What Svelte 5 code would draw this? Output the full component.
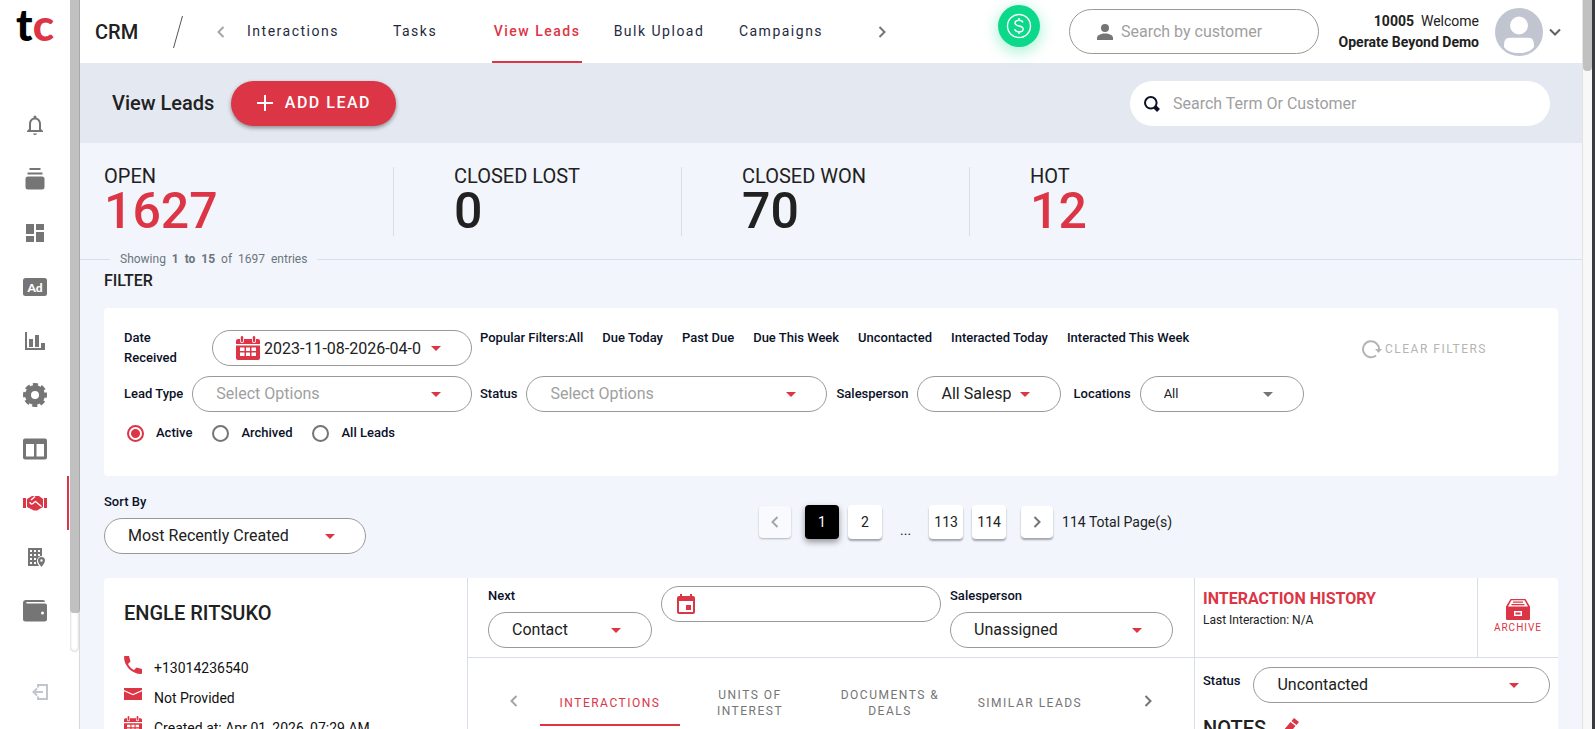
<script>
const icons = {
    bell: 'M12 22a2 2 0 0 0 2-1.6h-4A2 2 0 0 0 12 22zm6-6v-5c0-3.100-1.600-5.600-4.500-6.300V4a1.500 1.500 0 0 0-3 0v.7C7.600 5.400 6 7.900 6 11v5l-2 2v1h16v-1l-2-2zm-2 1H8v-6c0-2.500 1.500-4.500 4-4.500s4 2 4 4.500v6z',
    stack: 'M6.500 1h11v2h-11zM4.500 5.500h15v2h-15zM5 9.500h14a2.500 2.500 0 0 1 2.500 2.500v8a2.500 2.500 0 0 1-2.500 2.500H5A2.500 2.500 0 0 1 2.500 20v-8A2.500 2.500 0 0 1 5 9.500z',
    board: 'M3 3h8v10H3zM13 3h8v6h-8zM3 15h8v6H3zM13 11h8v10h-8z',
    chart: 'M2 3h2v16h18v2H2zM6 10h4v8H6zM12 6h4v12h-4zM18 14h4v5h-4z',
    table: 'M2 1.500h20a2 2 0 0 1 2 2v17a2 2 0 0 1-2 2H2a2 2 0 0 1-2-2v-17a2 2 0 0 1 2-2zM3 7v12.500h8V7zM13.500 7v12.500H21V7z',
    hands: 'M0 7h3v10H0zM21 7h3v10h-3zM4 8l5-3h7l4 3v8l-6 3.500H11L4 16z',
    building: 'M5 3h14v8a5 5 0 0 0-5 5c0 2 1 3.500 2 5H5zM7 5v2h2V5zm4 0v2h2V5zm4 0v2h2V5zM7 9v2h2V9zm4 0v2h2V9zm4 0v2h2V9zM7 13v2h2v-2zm4 0v2h2v-2zM7 17v2h2v-2zm4 0v2h2v-2zM18.500 12a3.500 3.500 0 0 1 3.500 3.500c0 2.500-3.500 6.500-3.500 6.500S15 18 15 15.500a3.500 3.500 0 0 1 3.500-3.500zm0 2.300a1.200 1.200 0 1 0 0 2.400 1.200 1.200 0 0 0 0-2.400z',
    wallet: 'M3 1h17a2 2 0 0 1 2 2H4a.8.8 0 0 0 0 1.600h18a2 2 0 0 1 2 2V20a2.500 2.500 0 0 1-2.500 2.500h-19A2.500 2.500 0 0 1 0 20V4a3 3 0 0 1 3-3zM19.500 12.500a1.500 1.500 0 1 0 0 3 1.500 1.500 0 0 0 0-3z'
};
const menu = [
    { id: 'bell', label: 'Notifications' },
    { id: 'stack', label: 'Inventory' },
    { id: 'board', label: 'Dashboard' },
    { id: 'ad', label: 'Ads' },
    { id: 'chart', label: 'Reports' },
    { id: 'gear', label: 'Settings' },
    { id: 'table', label: 'Tables' },
    { id: 'hands', label: 'CRM' },
    { id: 'building', label: 'Locations' },
    { id: 'wallet', label: 'Wallet' }
];
const sections = ['Interactions', 'Tasks', 'View Leads', 'Bulk Upload', 'Campaigns'];
const stats = [
    { label: 'OPEN', value: 1627, red: true },
    { label: 'CLOSED LOST', value: 0 },
    { label: 'CLOSED WON', value: 70 },
    { label: 'HOT', value: 12, red: true }
];
const popular = ['Due Today', 'Past Due', 'Due This Week', 'Uncontacted', 'Interacted Today', 'Interacted This Week'];
const leadTabs = ['INTERACTIONS', 'UNITS OF INTEREST', 'DOCUMENTS & DEALS', 'SIMILAR LEADS'];

let section = $state('View Leads');
let leadTab = $state('INTERACTIONS');
let page = $state(1);
let shown = $state('Active');
let dateRange = $state('2023-11-08-2026-04-01');
</script>

{#snippet chevron(dir)}
    <svg class="chevron" viewBox="0 0 12 12" width="12" height="12">
        <path d={dir === 'left' ? 'M8.500 1L3.500 6l5 5' : dir === 'down' ? 'M1 3.500l5 5 5-5' : 'M3.500 1l5 5-5 5'} />
    </svg>
{/snippet}

{#snippet calendar(size)}
    <svg class="red" viewBox="0 0 24 24" width={size} height={size}>
        <path fill-rule="evenodd" d="M2 3h2v2a2 2 0 0 0 4 0V3h8v2a2 2 0 0 0 4 0V3h2a2 2 0 0 1 2 2v3H0V5a2 2 0 0 1 2-2zM0 9.500h24V22a2 2 0 0 1-2 2H2a2 2 0 0 1-2-2zM4 11.500V15h4.500v-3.500zm6 0V15h4v-3.500zm5.500 0V15H20v-3.500zM4 16.500V20h4.500v-3.500zm6 0V20h4v-3.500zm5.500 0V20H20v-3.500z" />
        <rect x="4.800" y="0" width="2.400" height="6" rx="1.200" /><rect x="16.800" y="0" width="2.400" height="6" rx="1.200" />
    </svg>
{/snippet}

{#snippet dropdown(id, value, kind)}
    <div class="pill {kind}">
        <select {id}><option>{value}</option></select>
        <svg class="arrow" viewBox="0 0 10 5" width="10" height="5"><path d="M0 0h10L5 5z" /></svg>
    </div>
{/snippet}

<div class="app">
    <nav class="sidebar" aria-label="Main">
        <a class="logo" href="#home"><span>t</span><span class="red">c</span></a>
        {#each menu as item}
            <a class="item" class:active={item.id === 'hands'} href="#{item.id}" aria-label={item.label}>
                <svg viewBox="0 0 24 24" width="24" height="24">
                    {#if item.id === 'ad'}
                        <rect x="0" y="3" width="24" height="18" rx="2.500" />
                        <text x="12" y="17" text-anchor="middle">Ad</text>
                    {:else if item.id === 'gear'}
                        <circle class="wheel" cx="12" cy="12" r="7" />
                        <circle class="teeth" cx="12" cy="12" r="10" transform="rotate(-13 12 12)" />
                    {:else}
                        <path fill-rule="evenodd" d={icons[item.id]} />
                        {#if item.id === 'hands'}
                            <path class="grip" d="M7 11c0 2.500 3 2.500 4 .5l1.500-1 6 5M8 9l4-3.500" />
                        {/if}
                    {/if}
                </svg>
            </a>
        {/each}
        <a class="logout" href="#logout" aria-label="Log out">
            <svg viewBox="0 0 16 16" width="16" height="16"><path d="M6 3.500V1h9v14H6v-2.500M11 8H1.500M5 4.500L1.500 8 5 11.500" /></svg>
        </a>
    </nav>
    <div class="side-track"><div class="groove"><div class="thumb"></div></div></div>

    <main>
        <header>
            <h1>CRM</h1>
            <svg class="slash" viewBox="0 0 10 32" width="10" height="32"><path d="M9.500 0L.5 32" /></svg>
            <button class="icon dim" aria-label="Previous sections">{@render chevron('left')}</button>
            <div class="sections">
                {#each sections as name}
                    <button class:active={section === name} onclick={() => (section = name)}>{name}</button>
                {/each}
            </div>
            <button class="icon" aria-label="Next sections">{@render chevron('right')}</button>
            <div class="account">
                <button class="money" aria-label="Payments">
                    <svg viewBox="0 0 26 26" width="26" height="26"><circle cx="13" cy="13" r="11.500" /><path d="M17 9.500c-.5-1.500-2-2.200-4-2.200-2.300 0-4 1-4 2.800 0 4 8.200 1.800 8.200 5.800 0 1.800-1.800 2.900-4.200 2.900-2.200 0-3.900-.9-4.300-2.600M13 5v2.500M13 18.500V21" /></svg>
                </button>
                <div class="customer">
                    <svg viewBox="0 0 16 16" width="16" height="16"><circle cx="8" cy="4" r="4" /><path d="M0 16v-2c0-3 4-4.500 8-4.500s8 1.500 8 4.500v2z" /></svg>
                    <input type="text" placeholder="Search by customer" aria-label="Search by customer" />
                </div>
                <p class="user"><b>10005</b>&nbsp; Welcome<br /><b>Operate Beyond Demo</b></p>
                <button class="profile" aria-label="Profile">
                    <svg viewBox="0 0 48 48" width="48" height="48"><circle cx="24" cy="24" r="24" /><circle class="face" cx="24" cy="17.500" r="9" /><path class="face" d="M9 39c0-6.500 1-9.300 6-9.300h18c5 0 6 2.800 6 9.300-3 4-8 6-15 6s-12-2-15-6z" /></svg>
                    {@render chevron('down')}
                </button>
            </div>
        </header>

        <div class="titlebar">
            <h2>View Leads</h2>
            <button class="add"><svg viewBox="0 0 16 16" width="16" height="16"><path d="M8 0v16M0 8h16" /></svg>ADD LEAD</button>
            <div class="search">
                <svg viewBox="0 0 16 16" width="16" height="16"><circle cx="6.800" cy="6.800" r="5.800" /><path d="M11 11l3.500 3.500" /></svg>
                <input type="text" placeholder="Search Term Or Customer" aria-label="Search Term Or Customer" />
            </div>
        </div>

        <div class="stats">
            {#each stats as stat}
                <div class="stat">
                    <span>{stat.label}</span>
                    <strong class:red={stat.red}>{stat.value}</strong>
                </div>
            {/each}
        </div>
        <div class="showing"><span>Showing&nbsp; <b>1&nbsp; to&nbsp; 15</b>&nbsp; of&nbsp; 1697&nbsp; entries</span></div>

        <div class="content">
            <h3>FILTER</h3>
            <section class="filters">
                <div class="fields">
                    <div class="line">
                        <div class="left">
                            <label class="two" for="dates">Date Received</label>
                            <div class="pill date">
                                {@render calendar(24)}
                                <input id="dates" type="text" bind:value={dateRange} />
                                <svg class="arrow" viewBox="0 0 10 5" width="10" height="5"><path d="M0 0h10L5 5z" /></svg>
                            </div>
                        </div>
                        <div class="popular"><button><span>Popular Filters:</span>All</button>{#each popular as name}<button>{name}</button>{/each}</div>
                    </div>
                    <div class="line">
                        <div class="left">
                            <label for="type">Lead Type</label>
                            {@render dropdown('type', 'Select Options', 'empty')}
                        </div>
                        <div class="more">
                            <label for="status">Status</label>
                            {@render dropdown('status', 'Select Options', 'empty wide')}
                            <label for="sales">Salesperson</label>
                            {@render dropdown('sales', 'All Salespersons', 'sales')}
                            <label class="spaced" for="place">Locations</label>
                            {@render dropdown('place', 'All', 'place')}
                        </div>
                    </div>
                    <div class="radios">
                        {#each ['Active', 'Archived', 'All Leads'] as name}
                            <label><input type="radio" name="shown" value={name} bind:group={shown} />{name}</label>
                        {/each}
                    </div>
                </div>
                <button class="clear"><svg viewBox="0 0 20 20" width="20" height="20"><path d="M14 16.500A8 8 0 1 1 17 11" /><path class="tip" d="M13 10h7l-3.500 4z" /></svg>CLEAR FILTERS</button>
            </section>

            <div class="listbar">
                <div class="sort">
                    <label for="sort">Sort By</label>
                    {@render dropdown('sort', 'Most Recently Created', 'sortby')}
                </div>
                <div class="pages">
                    <button class="step" disabled aria-label="Previous page">{@render chevron('left')}</button>
                    <button class:active={page === 1} onclick={() => (page = 1)}>1</button>
                    <button class:active={page === 2} onclick={() => (page = 2)}>2</button>
                    <span class="dots">...</span>
                    <button class:active={page === 113} onclick={() => (page = 113)}>113</button>
                    <button class:active={page === 114} onclick={() => (page = 114)}>114</button>
                    <button class="step" aria-label="Next page">{@render chevron('right')}</button>
                    <span>114 Total Page(s)</span>
                </div>
            </div>

            <article class="lead">
                <div class="person">
                    <h2>ENGLE RITSUKO</h2>
                    <p><svg class="red" viewBox="0 0 18 18" width="18" height="18"><path d="M1 0h4l1.500 5.500L4 8c1.200 2.500 3.500 4.800 6 6l2.500-2.500L18 13v4a1 1 0 0 1-1 1C8 18 0 10 0 1a1 1 0 0 1 1-1z" /></svg><a href="tel:+13014236540">+13014236540</a></p>
                    <p><svg class="red" viewBox="0 0 18 18" width="18" height="18"><path d="M0 2h18v2l-9 4-9-4zM0 5.200l9 4 9-4V14H0z" /></svg>Not Provided</p>
                    <p>{@render calendar(18)}Created at: Apr 01, 2026, 07:29 AM</p>
                </div>
                <div class="work">
                    <div class="next">
                        <div class="field contact"><label for="next">Next</label>{@render dropdown('next', 'Contact', '')}</div>
                        <div class="pill when">
                            <svg class="red" viewBox="0 0 18 20" width="18" height="20"><path fill-rule="evenodd" d="M3 0h2v2h8V0h2v2h1a2 2 0 0 1 2 2v14a2 2 0 0 1-2 2H2a2 2 0 0 1-2-2V4a2 2 0 0 1 2-2h1zM2 7v11h14V7zM9 11h5v5H9z" /></svg>
                            <input type="text" aria-label="Contact date" />
                        </div>
                        <div class="field owner"><label for="owner">Salesperson</label>{@render dropdown('owner', 'Unassigned', '')}</div>
                    </div>
                    <div class="tabs">
                        <button class="icon dim" aria-label="Previous tabs">{@render chevron('left')}</button>
                        <div class="tablist">
                            {#each leadTabs as name}
                                <button class:active={leadTab === name} onclick={() => (leadTab = name)}>{name}</button>
                            {/each}
                        </div>
                        <button class="icon" aria-label="Next tabs">{@render chevron('right')}</button>
                    </div>
                </div>
                <div class="history">
                    <div class="top">
                        <div class="last"><h4>INTERACTION HISTORY</h4><span>Last Interaction: N/A</span></div>
                        <button class="archive">
                            <svg viewBox="0 0 24 21" width="24" height="21"><path fill-rule="evenodd" d="M4.500 0h15L24 7.500V20a1 1 0 0 1-1 1H1a1 1 0 0 1-1-1V7.500zM5.500 1.200L2 7.500h20l-3.500-6.300zM8 12v5h8v-5zM9.500 13.500h5v2h-5z" /><path d="M7 2.500h10v1.200H7zM5.500 5h13v1.300h-13z" /></svg>
                            ARCHIVE
                        </button>
                    </div>
                    <div class="state"><label for="state">Status</label>{@render dropdown('state', 'Uncontacted', '')}</div>
                    <h3 class="notes">NOTES <svg class="red" viewBox="0 0 18 18" width="18" height="18"><path d="M13 0l5 4-2.500 3-5-4zM9.500 4l5 4L7 17l-6 1 1-5z" /></svg></h3>
                </div>
            </article>
        </div>
    </main>
    <div class="page-track"><div></div></div>
</div>

<style>
:global(body) {
    font: 14px/20px Roboto, sans-serif;
    color: #212121;
}
.app {
    display: flex;
    height: 100vh;
    overflow: hidden;
    background: #f2f5fc;
}
h1, h2, h3, h4, p {
    margin: 0;
    font-weight: 500;
}
h1, h2 {
    font-size: 20px;
    line-height: 24px;
}
button, input, select {
    border: 0;
    background: none;
    padding: 0;
    margin: 0;
    font: inherit;
    color: inherit;
    min-width: 0;
}
a {
    color: inherit;
    text-decoration: none;
}
svg {
    display: block;
    flex: none;
    fill: currentColor;
}
label {
    font-size: 13px;
    font-weight: 500;
    color: #0a1128;
}
input::placeholder {
    color: #a0a0a0;
    opacity: 1;
}
.red {
    color: #dc3545;
}
.chevron {
    fill: none;
    stroke: currentColor;
    stroke-width: 2;
}
.icon {
    color: #757575;
}
.dim {
    color: #a5a5a5;
}

/* sidebar */
.sidebar {
    width: 70px;
    background: #fff;
    color: #757575;
    flex: none;
}
.logo {
    display: flex;
    justify-content: center;
    height: 98px;
    font: 900 44px/48px Lato, sans-serif;
    color: #000;
}
.item {
    display: flex;
    align-items: center;
    justify-content: center;
    height: 54px;
    margin-right: 1px;
    padding-left: 1px;
}
.item.active {
    color: #dc3545;
    box-shadow: inset -2px 0 #dc3545;
}
.item text {
    font: 900 12px Lato, sans-serif;
    fill: #fff;
}
.grip {
    fill: none;
    stroke: #fff;
    stroke-width: 1.4;
}
.wheel {
    fill: none;
    stroke: currentColor;
    stroke-width: 6;
}
.teeth {
    fill: none;
    stroke: currentColor;
    stroke-width: 4;
    stroke-dasharray: 4.800 3.054;
}
.logout {
    display: flex;
    justify-content: center;
    padding: 46px 0 0 10px;
    color: #c0c5d0;
}
.logout svg {
    fill: none;
    stroke: currentColor;
    stroke-width: 2;
}
.side-track {
    width: 9px;
    flex: none;
    background: #fff;
    border-right: 1px solid #d5d8df;
}
.groove {
    height: 652px;
    border-radius: 0 0 5px 5px;
    box-shadow: inset 0 0 3px #0004;
}
.thumb {
    height: 613px;
    background: #c0c0c0;
    border-radius: 0 0 4px 4px;
    box-shadow: 1px 0 #a9a9a9;
}
.page-track {
    width: 9px;
    flex: none;
    background: #f8f8f8;
    border-left: 1px solid #e2e2e2;
    border-right: 3px solid #3a3b40;
}
.page-track div {
    height: 71px;
    background: #c1c1c1;
    border-radius: 0 0 4px 4px;
}

/* header */
main {
    flex: 1;
    min-width: 0;
}
header {
    display: flex;
    align-items: center;
    height: 63px;
    padding-left: 15px;
    background: #fff;
}
header h1 {
    width: 78px;
}
.slash {
    margin-right: 32px;
    stroke: #555;
}
.sections {
    display: flex;
    gap: 32px;
    margin: 0 50px 0 21px;
    align-self: stretch;
}
.sections button {
    width: 90px;
    white-space: nowrap;
    letter-spacing: 1.5px;
    color: #1f2a40;
    border-bottom: 2px solid transparent;
    display: flex;
    align-items: center;
    justify-content: center;
}
.sections .active {
    color: #dc3545;
    font-weight: 500;
    border-color: #dc3545;
}
.account {
    display: flex;
    align-items: center;
    margin-left: auto;
    padding-right: 21px;
}
.money {
    width: 42px;
    height: 42px;
    margin: 0 29px 12px 0;
    display: flex;
    align-items: center;
    justify-content: center;
    border-radius: 50%;
    background: #0bd888;
    color: #fff;
    box-shadow: 0 4px 16px #0bd88866;
}
.money svg {
    fill: none;
    stroke: #fff;
    stroke-width: 1.4;
}
.customer {
    display: flex;
    align-items: center;
    gap: 8px;
    width: 194px;
    height: 43px;
    padding: 0 27px;
    border: 1px solid #999;
    border-radius: 24px;
    color: #757575;
    font-size: 16px;
}
.customer input {
    flex: 1;
}
.user {
    width: 160px;
    text-align: right;
    line-height: 21px;
    white-space: nowrap;
    font-weight: 400;
}
.profile {
    display: flex;
    align-items: center;
    gap: 6px;
    margin-left: 16px;
    color: #616161;
}
.profile > svg:first-child {
    color: #c0c5d0;
}
.face {
    fill: #fff;
}

.titlebar {
    display: flex;
    align-items: center;
    height: 80px;
    padding: 0 32px;
    background: #e4e8f0;
}
.add {
    display: flex;
    align-items: center;
    justify-content: center;
    gap: 12px;
    width: 165px;
    height: 45px;
    margin-left: 17px;
    border-radius: 23px;
    background: #dc3545;
    color: #fff;
    font-size: 16px;
    font-weight: 500;
    letter-spacing: 1.5px;
    box-shadow: 0 2px 4px #0006;
}
.add svg {
    stroke: #fff;
    stroke-width: 2;
}
.search {
    display: flex;
    align-items: center;
    gap: 13px;
    width: 420px;
    height: 45px;
    box-sizing: border-box;
    margin-left: auto;
    padding: 2px 14px 0;
    border-radius: 23px;
    background: #fff;
    font-size: 16px;
}
.search input {
    flex: 1;
}
.search svg {
    fill: none;
    stroke: #0a1128;
    stroke-width: 2;
}
.search path {
    stroke-width: 4;
}

.stats {
    display: grid;
    grid-template-columns: 290px repeat(4, 1fr);
    margin: 24px 36px 0 24px;
}
.stat {
    height: 69px;
    padding-left: 60px;
    border-right: 1px solid #d9dce3;
}
.stat:first-child {
    padding-left: 0;
}
.stat:last-child {
    border: 0;
}
.stat span {
    display: block;
    font-size: 20px;
    line-height: 19px;
}
.stat strong {
    display: block;
    font-size: 50px;
    font-weight: 500;
    line-height: 50px;
}
.showing {
    display: flex;
    align-items: center;
    margin-top: 13px;
    font-size: 12px;
    color: #6c757d;
}
.showing::before, .showing::after {
    content: '';
    width: 30px;
    height: 1px;
    background: #d6dfec;
}
.showing::after {
    flex: 1;
}
.showing span {
    padding: 0 10px;
}

/* filter card */
.content {
    padding: 0 24px;
}
.content > h3 {
    font-size: 16px;
    line-height: 24px;
    margin-bottom: 15px;
}
.filters {
    display: flex;
    height: 168px;
    box-sizing: border-box;
    padding: 20px 20px 0;
    border-radius: 4px;
    background: #fff;
}
.fields {
    flex: 1;
}
.line, .left, .more {
    display: flex;
    align-items: center;
}
.line {
    gap: 8px;
    margin-bottom: 8px;
}
.left {
    width: 348px;
    justify-content: space-between;
    gap: 9px;
}
.left .pill {
    flex: 1;
}
.more {
    gap: 9px;
}
.more .spaced {
    margin-left: 3px;
}
.two {
    width: 79px;
}
.pill {
    display: flex;
    align-items: center;
    height: 36px;
    box-sizing: border-box;
    padding: 0 30px 0 23px;
    border: 1px solid #999;
    border-radius: 18px;
    background: #fff;
    font-size: 16px;
}
.pill select, .pill input {
    appearance: none;
    flex: 1;
    height: 34px;
    text-overflow: clip;
    overflow: hidden;
}
.arrow {
    color: #dc3545;
    margin-left: 9px;
}
.empty {
    color: #a0a0a0;
}
.left .date {
    flex: none;
    width: 260px;
}
.date input {
    margin-left: 4px;
}
.wide {
    width: 301px;
}
.sales {
    width: 144px;
}
.place {
    width: 164px;
    font-size: 13px;
}
.place .arrow {
    color: #757575;
}
.popular {
    display: flex;
    gap: 19px;
    margin-bottom: 20px;
    font-size: 13px;
    font-weight: 500;
    color: #0a1128;
}
.radios {
    display: flex;
    gap: 20px;
    margin-left: 3px;
    padding-top: 3px;
}
.radios label {
    display: flex;
    align-items: center;
    gap: 12px;
}
.radios input {
    appearance: none;
    width: 17px;
    height: 17px;
    border: 2px solid #757575;
    border-radius: 50%;
    box-sizing: border-box;
}
.radios input:checked {
    border-color: #dc3545;
    background: radial-gradient(#dc3545 4px, #fff 5px);
}
.clear {
    display: flex;
    align-items: center;
    align-self: flex-start;
    gap: 3px;
    margin: 11px 51px 0 0;
    font-size: 12px;
    letter-spacing: 1.5px;
    color: #b4b4b4;
}
.clear svg {
    fill: none;
    stroke: currentColor;
    stroke-width: 2;
}
.clear .tip {
    fill: currentColor;
    stroke: none;
}

/* sort and pages */
.listbar {
    display: flex;
    height: 102px;
}
.sort {
    width: 655px;
    padding-top: 16px;
}
.sort label {
    display: block;
    margin-bottom: 6px;
}
.sortby {
    width: 262px;
}
.pages {
    display: flex;
    align-items: center;
    align-self: flex-start;
    gap: 9px;
    padding-top: 28px;
}
.pages button {
    min-width: 34px;
    height: 34px;
    padding: 0 5px;
    border-radius: 4px;
    background: #fff;
    box-shadow: 0 2px 2px #0005;
}
.pages .step {
    min-width: 32px;
    height: 32px;
    padding: 0 10px;
    color: #757575;
}
.pages .step:first-child {
    margin-right: 5px;
}
.pages .step:disabled {
    background: #f9fafd;
    color: #a5a5a5;
    box-shadow: 0 1px 2px #0004;
}
.pages button:nth-last-child(2) {
    margin-left: 6px;
}
.pages .active {
    background: #000;
    color: #fff;
    box-shadow: 0 3px 6px #0006;
}
.dots {
    padding: 16px 9px 0;
}

/* lead card */
.lead {
    display: flex;
    height: 400px;
    border-radius: 4px;
    background: #fff;
}
.person {
    width: 343px;
    padding: 23px 0 0 20px;
    border-right: 1px solid #d9dfe8;
}
.person h2 {
    margin-bottom: 26px;
}
.person p {
    display: flex;
    align-items: flex-start;
    gap: 12px;
    height: 30px;
    font-weight: 400;
    line-height: 34px;
    color: #111;
}
.person svg {
    margin-top: 5px;
}
.work {
    flex: 1;
    border-right: 1px solid #d9dfe8;
}
.next {
    display: flex;
    gap: 9px;
    height: 80px;
    box-sizing: border-box;
    padding: 8px 21px 8px 20px;
    border-bottom: 1px solid #d9dfe8;
}
.field label {
    display: block;
    margin-bottom: 6px;
}
.contact {
    width: 164px;
}
.when {
    flex: 1;
    padding: 0 15px;
}
.owner {
    width: 223px;
}
.tabs {
    display: flex;
    align-items: center;
    padding: 18px 40px 0;
}
.tablist {
    display: flex;
    flex: 1;
    margin: 0 38px 0 20px;
}
.tablist button {
    width: 140px;
    height: 50px;
    padding: 6px 16px 0;
    font-size: 12px;
    line-height: 16px;
    letter-spacing: 1.5px;
    color: #757575;
    border-bottom: 2px solid transparent;
}
.tablist .active {
    color: #dc3545;
    border-color: #dc3545;
}
.history {
    width: 363px;
}
.top {
    display: flex;
    height: 80px;
    box-sizing: border-box;
    border-bottom: 1px solid #d9dfe8;
}
.last {
    flex: 1;
    padding: 10px 8px;
    font-size: 12px;
}
.last h4 {
    font-size: 16px;
    font-weight: 700;
    line-height: 22px;
    color: #dc3545;
}
.archive {
    display: flex;
    flex-direction: column;
    align-items: center;
    justify-content: center;
    width: 81px;
    border-left: 1px solid #d9dfe8;
    color: #dc3545;
    font-size: 10px;
    line-height: 16px;
    letter-spacing: 1px;
}
.state {
    display: flex;
    gap: 13px;
    padding: 9px 8px 0;
}
.state label {
    margin-top: 4px;
}
.state .pill {
    flex: 1;
}
.notes {
    display: flex;
    gap: 15px;
    padding: 15px 8px;
    font-size: 20px;
}
</style>
